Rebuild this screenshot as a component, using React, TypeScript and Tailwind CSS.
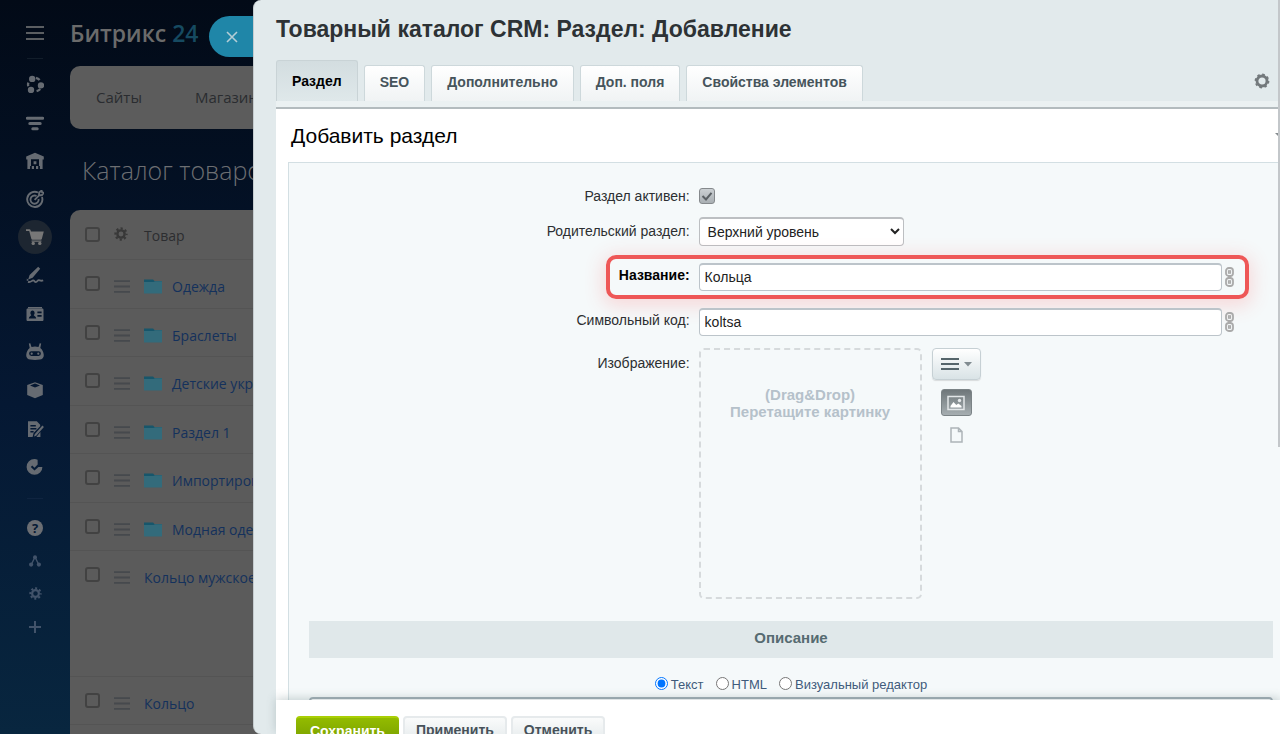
import type { ReactNode } from 'react';

function Bars({ className }: { className?: string }) {
  return (
    <svg viewBox="0 0 18 14" className={className} aria-hidden="true">
      <path d="M0 1h18M0 7h18M0 13h18" stroke="currentColor" strokeWidth="2" />
    </svg>
  );
}

function Gear({ className }: { className?: string }) {
  return (
    <svg viewBox="0 0 20 20" className={className} aria-hidden="true">
      <circle cx="10" cy="10" r="5.2" fill="none" stroke="currentColor" strokeWidth="3.4" />
      <circle cx="10" cy="10" r="8" fill="none" stroke="currentColor" strokeWidth="3" strokeDasharray="3.14 3.14" strokeDashoffset="1.57" />
    </svg>
  );
}

const navIcons: { label: string; art: ReactNode }[] = [
  {
    label: 'Совместная работа',
    art: (
      <>
        <path d="M10 2.800a6.600 6.600 0 0 1 3.600 2.300M14.200 14a7 7 0 0 1-3.600 2.200M2.200 11.200a6.600 6.600 0 0 1 .1-3.600" fill="none" stroke="currentColor" strokeWidth="2.400" />
        <circle cx="6.200" cy="3.900" r="3.200" />
        <circle cx="15" cy="10.400" r="3.200" />
        <circle cx="5" cy="15" r="3.200" />
      </>
    ),
  },
  {
    label: 'CRM',
    art: <path d="M1.200 5.300h15.600M3.800 10.500h10.400M6.800 15.700h4.400" fill="none" stroke="currentColor" strokeWidth="3" strokeLinecap="round" />,
  },
  {
    label: 'Склад',
    art: (
      <path
        fillRule="evenodd"
        d="M9 .8 17.8 4.6v3H16.600V17h-2.700v-3h-1.700v3H10v-3H8v3H5.800v-3H4.100v3H1.400V7.600H.2v-3L9 .8ZM5 7.200V14h8V7.200H5Zm2.600 2h2.800v3H7.600v-3Z"
      />
    ),
  },
  {
    label: 'Маркетинг',
    art: (
      <g fill="none" stroke="currentColor" strokeWidth="1.9">
        <path d="M12 2.5A7.6 7.6 0 1 0 16 7" />
        <path d="M10.5 6A4.1 4.1 0 1 0 12.6 9" />
        <path d="m8.6 9.8 5-5M13 5l.2-2.6L15.6.6l.5 1.6 1.6.6-1.9 2.4L13 5Z" />
      </g>
    ),
  },
  {
    label: 'Магазины',
    art: (
      <>
        <path d="M0 1.2h3.4c.6 0 1 .4 1.2 1L5 3.6h12.8l-2 7.4c-.1.5-.5.8-1 .8H6.4c-.5 0-.9-.3-1-.8L3.2 3H0V1.2ZM5.6 12.4h9.8v1.4H5.6z" />
        <circle cx="7.2" cy="15.4" r="1.7" />
        <circle cx="13.8" cy="15.4" r="1.7" />
      </>
    ),
  },
  {
    label: 'Подпись',
    art: (
      <>
        <path d="m12.2.8 2 1.9-7.6 9-4.4 1.9 1.4-4.5L12.2.8ZM.8 12.4l2 1.8-2 .9v-2.7Z" />
        <path d="M2 15.8c3 1 3.600-1.400 5.200-1.400 1.400 0 1.200 1.700 2.600 1.700 1.600 0 1.600-2 3-2 1.200 0 1.400 1.300 4.400.3" fill="none" stroke="currentColor" strokeWidth="1.8" />
      </>
    ),
  },
  {
    label: 'Сотрудники',
    art: (
      <path
        fillRule="evenodd"
        d="M2 2h14v1.200H2V2ZM1.800 3.600h14.400c.8 0 1.300.5 1.300 1.300v9.800c0 .8-.5 1.300-1.300 1.300H1.800C1 16 .5 15.500.5 14.700V4.900c0-.8.5-1.300 1.300-1.300ZM6.500 5.600c-1.300 0-2.100 1-2.100 2.300 0 .9.400 1.700 1 2.100-.1.900-2.300 1-2.600 3.400h7.400c-.3-2.400-2.500-2.500-2.600-3.400.6-.4 1-1.200 1-2.100 0-1.300-.8-2.300-2.100-2.300Zm4.900.9v1.800h4.200V6.500h-4.200Zm0 3.400v1.800h4.200V9.900h-4.200Z"
      />
    ),
  },
  {
    label: 'Роботы',
    art: (
      <path
        fillRule="evenodd"
        d="m2.800.6 1.500-.3 1.200 3.800a10 10 0 0 1 7 0L13.700.3l1.500.3-.9 4.400c2 1.500 3.200 4 3.500 7 .2 2.800-1.800 4.300-4 4.600-3.200.4-6.400.4-9.600 0-2.200-.3-4.200-1.800-4-4.600.3-3 1.500-5.500 3.500-7L2.800.6ZM5.400 8.300a2.300 2.300 0 0 0 0 4.600h7.200a2.300 2.300 0 0 0 0-4.600H5.400Zm.3 1.300a1.100 1.100 0 1 1 0 2.200 1.100 1.100 0 0 1 0-2.200Zm6.600 0a1.100 1.100 0 1 1 0 2.200 1.100 1.100 0 0 1 0-2.200Z"
      />
    ),
  },
  {
    label: 'Маркет',
    art: <path fillRule="evenodd" d="M9 1.200 16.800 4v10L9 17.200 1.200 14V4L9 1.200ZM9 2.600 4 4.500 9 6.600l5-2.100-5-1.900Z" />,
  },
  {
    label: 'Документы',
    art: (
      <path
        fillRule="evenodd"
        d="M2 1.200h8.800l3.400 3.600v1.400L7.600 13l-1 4H2V1.200ZM4.400 5v1.500h5.400V5H4.400Zm0 3v1.500h6V8h-6Zm0 3v1.500h3.200V11H4.400ZM16.400 5.600l1.500 1.500-7.700 8.600-2.200.9.700-2.300 7.700-8.700ZM14.400 12v5h-4l4-5Z"
      />
    ),
  },
  {
    label: 'Задачи',
    art: (
      <path
        fillRule="evenodd"
        d="M8.500 1a7.900 7.900 0 1 0 7.900 7.900h-4L8.500 12.500 4.800 9l1.400-1.500 2.300 2.200 3.200-3.100L11.600 1.700A7.900 7.900 0 0 0 8.500 1Z"
      />
    ),
  },
];

const rows: { name: string; folder: boolean; tall?: boolean }[] = [
  { name: 'Одежда', folder: true },
  { name: 'Браслеты', folder: true },
  { name: 'Детские украшения', folder: true },
  { name: 'Раздел 1', folder: true },
  { name: 'Импортированные', folder: true },
  { name: 'Модная одежда', folder: true },
  { name: 'Кольцо мужское', folder: false, tall: true },
  { name: 'Кольцо', folder: false },
];

function Folder() {
  return (
    <svg viewBox="0 0 18 15" className="h-[15px] w-[18px] shrink-0" aria-hidden="true">
      <path d="M0 .5h9L10.500 2h7.500v4H0z" fill="#17566b" />
      <path d="M0 3h9.500L11 2.200h7V14.500H0z" fill="#336b7b" />
    </svg>
  );
}

function DimCheckbox({ label }: { label: string }) {
  return (
    <input
      type="checkbox"
      aria-label={label}
      className="block size-[15px] appearance-none rounded-[3px] border-2 border-[#424242] bg-transparent"
    />
  );
}

function SideNav() {
  return (
    <nav className="flex w-[70px] shrink-0 flex-col items-center text-[#666b72]" aria-label="Главное меню">
      <div className="flex h-[65px] flex-col items-center justify-between pt-[26px] pb-[6px]">
        <button type="button" aria-label="Меню" className="text-[#5b5e62]">
          <Bars className="h-[14px] w-[18px]" />
        </button>
        <span className="h-px w-4 bg-[#121d2a]" />
      </div>
      <div className="grid h-[421px] auto-rows-fr">
        {navIcons.map((item, i) => (
          <a
            key={item.label}
            href="#"
            aria-label={item.label}
            className={
              i === 4
                ? 'flex size-[34px] items-center justify-center self-center rounded-full bg-[#1d2631] text-[#777777]'
                : 'flex w-[34px] items-center justify-center'
            }
          >
            <svg viewBox="0 0 18 18" className="size-[18px]" fill="currentColor" aria-hidden="true">
              {item.art}
            </svg>
          </a>
        ))}
      </div>
      <div className="flex h-[25px] items-center">
        <span className="h-px w-4 bg-[#0f2440]" />
      </div>
      <div className="grid auto-rows-[33px] place-items-center text-[#42536a]">
        <a href="#" aria-label="Помощь" className="flex size-4 items-center justify-center rounded-full bg-[#6b6e73] font-['Open_Sans',sans-serif] text-[13px] leading-4 font-bold text-[#061a35]">
          ?
        </a>
        <a href="#" aria-label="Карта сайта">
          <svg viewBox="0 0 12 12" className="size-3" fill="currentColor" aria-hidden="true">
            <path d="M6 2 2.200 9.800M6 2l3.800 7.800" fill="none" stroke="currentColor" strokeWidth="1.400" />
            <circle cx="6" cy="2.200" r="2" />
            <circle cx="2.100" cy="9.600" r="2.100" />
            <circle cx="9.900" cy="9.600" r="2.100" />
          </svg>
        </a>
        <a href="#" aria-label="Настройки">
          <Gear className="size-[13px]" />
        </a>
        <a href="#" aria-label="Добавить">
          <svg viewBox="0 0 12 12" className="size-3" aria-hidden="true">
            <path d="M6 0v12M0 6h12" stroke="currentColor" strokeWidth="2" />
          </svg>
        </a>
      </div>
    </nav>
  );
}

function Catalog() {
  return (
    <div className="flex w-[191px] shrink-0 flex-col overflow-hidden whitespace-nowrap">
      <div className="flex h-[66px] items-center text-[23px] leading-[32px] font-semibold text-[#6b6b6b]">
        Битрикс&nbsp;<span className="text-[#164a61]">24</span>
      </div>
      <div className="flex h-[63px] w-[600px] shrink-0 items-center gap-[53px] rounded-[10px] bg-[#5c5c5c] px-[26px] text-[15px] font-medium text-[#2a2c30]">
        <a href="#">Сайты</a>
        <a href="#">Магазины</a>
      </div>
      <h2 className="h-[81px] shrink-0 pl-3 text-[25px] leading-[82px] font-light text-[#6c6e72]">Каталог товаров</h2>
      <div className="w-[600px] flex-1 rounded-tl-[10px] bg-[#5b5b5b]">
        <table className="w-full border-collapse text-left text-[14px] leading-5">
          <thead>
            <tr className="h-[49px] border-b border-[#545454]">
              <th className="w-11 pl-[15px]">
                <DimCheckbox label="Выбрать все" />
              </th>
              <th className="w-[30px]">
                <Gear className="size-[14px] text-[#383838]" />
              </th>
              <th className="pt-[3px] font-normal text-[#2c2d30]">Товар</th>
            </tr>
          </thead>
          <tbody className="align-top text-[#14315c]">
            {rows.map((row) => (
              <tr key={row.name} className={row.tall ? 'h-[126px] border-b border-[#545454]' : 'border-b border-[#545454] odd:h-[49px] even:h-12'}>
                <td className="pt-4 pl-[15px]">
                  <DimCheckbox label={row.name} />
                </td>
                <td className="pt-5">
                  <Bars className="h-[13px] w-4 text-[#46494d]" />
                </td>
                <td className="pt-[17px]">
                  <a href="#" className="flex items-center gap-[10px]">
                    {row.folder && <Folder />}
                    {row.name}
                  </a>
                </td>
              </tr>
            ))}
          </tbody>
        </table>
      </div>
    </div>
  );
}

const tabs = ['Раздел', 'SEO', 'Дополнительно', 'Доп. поля', 'Свойства элементов'];

function LinkChain() {
  return (
    <svg viewBox="0 0 9 20" className="h-5 w-[9px]" fill="none" stroke="#aaaaaa" aria-hidden="true">
      <rect x="1" y="1" width="7" height="8" rx="2.800" strokeWidth="1.800" />
      <rect x="3.500" y="3.800" width="2" height="2.400" strokeWidth="1.200" />
      <rect x="1" y="11" width="7" height="8" rx="2.800" strokeWidth="1.800" />
      <rect x="3.500" y="13.800" width="2" height="2.400" strokeWidth="1.200" />
      <path d="M4.500 8v4" strokeWidth="2.400" />
    </svg>
  );
}

function TextRow({ id, label, value, marked }: { id: string; label: string; value: string; marked?: boolean }) {
  return (
    <div className="flex h-[45px] items-center">
      <label
        htmlFor={id}
        className={marked ? 'w-2/5 pr-[5px] pb-[3px] text-right font-bold text-black' : 'w-2/5 pr-[5px] pb-[3px] text-right'}
      >
        {label}
      </label>
      <div className="relative flex flex-1 items-center gap-[3px] pr-[39px] pl-1">
        <input
          id={id}
          type="text"
          defaultValue={value}
          className="h-7 min-w-0 flex-1 rounded-[4px] border border-t-2 border-[#bcc4ca] bg-white px-[5px] text-[14px] text-[#222]"
        />
        <button type="button" aria-label={'Связать: ' + label}>
          <LinkChain />
        </button>
        {marked && (
          <span className="pointer-events-none absolute -top-2 right-6 -bottom-2 -left-[89px] rounded-[10px] border-4 border-[#ee5757] shadow-[0_4px_18px_4px_rgba(255,80,80,0.17)]" />
        )}
      </div>
    </div>
  );
}

function SectionForm() {
  return (
    <form className="ml-3 flex flex-1 flex-col border-t border-l border-[#d3dfe3] bg-[#f5f9fa] pt-4 pr-[7px] pl-5 text-[14px] leading-5 text-[#2c2f31]">
      <div className="flex h-[34px] items-center">
        <label htmlFor="active" className="w-2/5 pr-[5px] text-right">
          Раздел активен:
        </label>
        <div className="relative flex flex-1 items-center pl-1">
          <input
            id="active"
            type="checkbox"
            defaultChecked
            className="size-4 appearance-none rounded-[3px] border border-[#85898c] bg-linear-to-b from-[#cbd0d3] to-[#a9afb3]"
          />
          <svg viewBox="0 0 16 16" className="pointer-events-none absolute left-1 size-4" aria-hidden="true">
            <path d="m3.500 8 3.500 3.500L12.500 4.800" fill="none" stroke="#5a6064" strokeWidth="2" />
          </svg>
        </div>
      </div>
      <div className="flex h-9 items-center">
        <label htmlFor="parent" className="w-2/5 pr-[5px] text-right">
          Родительский раздел:
        </label>
        <div className="flex flex-1 items-center pl-1">
          <select id="parent" className="h-[29px] w-[205px] rounded-[4px] border border-t-2 border-[#bcbfc2] bg-white px-1 text-[14px] text-[#222]">
            <option>Верхний уровень</option>
          </select>
        </div>
      </div>
      <div className="pt-[5px]">
        <TextRow id="name" label="Название:" value="Кольца" marked />
        <TextRow id="code" label="Символьный код:" value="koltsa" />
      </div>
      <div className="flex pt-1">
        <span className="w-2/5 pt-[5px] pr-[5px] text-right">Изображение:</span>
        <div className="flex flex-1 gap-[10px] pl-1">
          <div className="h-[251px] w-[223px] rounded-[5px] border-2 border-dashed border-[#d6dadc] pt-9 text-center text-[15px] leading-[17px] font-bold text-[#b5c1ca]">
            (Drag&amp;Drop)
            <br />
            Перетащите картинку
          </div>
          <div className="flex flex-col items-center">
            <button
              type="button"
              aria-label="Вид"
              className="flex h-8 w-[49px] items-center justify-center gap-[5px] rounded-[4px] border border-[#c6d0d4] bg-linear-to-b from-white to-[#d9e3e6] shadow-[0_1px_1px_rgba(0,0,0,0.12)]"
            >
              <svg viewBox="0 0 18 12" className="h-3 w-[18px]" aria-hidden="true">
                <path d="M0 1h18M0 6h18M0 11h18" stroke="#55656b" strokeWidth="2" />
              </svg>
              <svg viewBox="0 0 8 5" className="h-[5px] w-2" aria-hidden="true">
                <path d="M0 0h8L4 4.600z" fill="#818c91" />
              </svg>
            </button>
            <button
              type="button"
              aria-label="Картинка"
              className="mt-[9px] flex h-[27px] w-[31px] items-center justify-center rounded-[3px] border border-[#7b8386] bg-linear-to-b from-[#6f777a] to-[#a6aeb1]"
            >
              <svg viewBox="0 0 18 16" className="h-4 w-[18px]" aria-hidden="true">
                <rect x="1" y="1.500" width="16" height="13" fill="none" stroke="#e2e6e8" strokeWidth="1.500" />
                <path d="M3.500 12.500V11l3-4 2.800 3 2-1.500 3.200 2.500v1.500z" fill="#fff" />
                <circle cx="12.500" cy="5.500" r="1.700" fill="#e6e9eb" />
              </svg>
            </button>
            <button type="button" aria-label="Файл" className="mt-[11px]">
              <svg viewBox="0 0 13 16" className="h-4 w-[13px]" aria-hidden="true">
                <path d="M1 1h7.500L12 4.500V15H1zM8.500 1v3.500H12" fill="none" stroke="#adb4b8" strokeWidth="1.500" />
              </svg>
            </button>
          </div>
        </div>
      </div>
      <h3 className="mt-[22px] h-[37px] bg-[#e0e8ea] text-center text-[15px] leading-[33px] font-bold text-[#566b71]">Описание</h3>
      <fieldset className="flex items-center justify-center pt-[17px] text-[13px] text-[#3f5b7c]">
        <label className="flex items-center gap-[3px] pr-3">
          <input type="radio" name="format" defaultChecked className="mb-1 size-[13px]" />
          Текст
        </label>
        <label className="flex items-center gap-[3px] pr-3">
          <input type="radio" name="format" className="mb-1 size-[13px]" />
          HTML
        </label>
        <label className="flex items-center gap-[3px]">
          <input type="radio" name="format" className="mb-1 size-[13px]" />
          Визуальный редактор
        </label>
      </fieldset>
      <textarea aria-label="Описание" className="mt-[2px] h-[200px] shrink-0 rounded-[4px] border-2 border-[#a3afb7] bg-white" />
    </form>
  );
}

function SectionPanel() {
  return (
    <div className="relative z-10 -ml-2 flex min-w-0 flex-1">
      <button
        type="button"
        aria-label="Закрыть"
        className="absolute top-4 -left-11 flex h-[41px] w-[45px] items-center justify-center rounded-l-full bg-[#1f86a8]"
      >
        <svg viewBox="0 0 12 12" className="size-3" aria-hidden="true">
          <path d="m1 1 10 10M11 1 1 11" stroke="#b4cdd6" strokeWidth="1.600" />
        </svg>
      </button>
      <section className="relative flex min-w-0 flex-1 flex-col overflow-hidden rounded-l-[8px] border-l border-[#c5cccf] bg-[#e2eaec] pl-[22px] font-['Liberation_Sans',Arial,sans-serif]">
        <h1 className="h-[60px] shrink-0 text-[23px] leading-[58px] font-bold text-[#2d3235]">Товарный каталог CRM: Раздел: Добавление</h1>
        <div className="flex h-[41px] shrink-0 items-end gap-[6px]" role="tablist">
          {tabs.map((tab, i) => (
            <button
              key={tab}
              type="button"
              role="tab"
              aria-selected={i === 0}
              className={
                i === 0
                  ? 'h-[41px] rounded-t-[3px] border border-b-0 border-[#c9d3d6] bg-linear-to-b from-[#d3dde0] to-[#dfe8ea] px-[15px] text-[14px] font-bold text-black'
                  : 'h-9 rounded-t-[3px] border border-b-0 border-[#cdd8db] bg-linear-to-b from-white to-[#f0f3f4] px-[15px] pb-[2px] text-[14px] font-bold text-[#46545b]'
              }
            >
              {tab}
            </button>
          ))}
          <button type="button" aria-label="Настройки формы" className="mr-[10px] mb-3 ml-auto text-[#73797c]">
            <svg viewBox="0 0 16 16" className="size-4" fill="none" stroke="currentColor" aria-hidden="true">
              <circle cx="8" cy="8" r="5" strokeWidth="2.800" />
              <circle cx="8" cy="8" r="6.600" strokeWidth="1.600" strokeDasharray="2.590 2.590" />
            </svg>
          </button>
        </div>
        <div className="h-2 shrink-0 border-b-2 border-[#b3bbbe] bg-[#ebf1f2]" />
        <div className="flex min-h-0 flex-1 flex-col overflow-hidden bg-white">
          <div className="flex h-[53px] shrink-0 items-center justify-between pl-[15px]">
            <h2 className="text-[21px] text-black">Добавить раздел</h2>
            <svg viewBox="0 0 5 5" className="h-[5px] w-[5px]" aria-hidden="true">
              <path d="M0 0h5v5z" fill="#858b8e" />
            </svg>
          </div>
          <SectionForm />
        </div>
        <footer className="relative flex h-[34px] shrink-0 gap-1 bg-white pt-4 pl-5 shadow-[0_-2px_9px_rgba(90,115,120,0.3)]">
          <button
            type="button"
            className="h-[29px] shrink-0 rounded-[4px] border-t-2 border-[#a9cf05] bg-linear-to-b from-[#93bb00] to-[#759c00] px-[14px] text-[14px] font-bold text-white"
          >
            Сохранить
          </button>
          {['Применить', 'Отменить'].map((label) => (
            <button
              key={label}
              type="button"
              className="h-[29px] shrink-0 rounded-[4px] border-2 border-[#e6eaec] bg-linear-to-b from-[#fafbfb] to-[#e3e9eb] px-[11px] text-[14px] font-bold text-[#47525a]"
            >
              {label}
            </button>
          ))}
        </footer>
        <span className="absolute top-0 right-0 h-[447px] w-[2px] bg-[#c3c7ca]" />
      </section>
    </div>
  );
}

export default function App() {
  return (
    <div className="flex h-screen overflow-hidden bg-linear-to-b from-[#020a17] via-[#051833] via-55% to-[#08263f] font-['Open_Sans','Noto_Sans',sans-serif]">
      <SideNav />
      <Catalog />
      <SectionPanel />
    </div>
  );
}
